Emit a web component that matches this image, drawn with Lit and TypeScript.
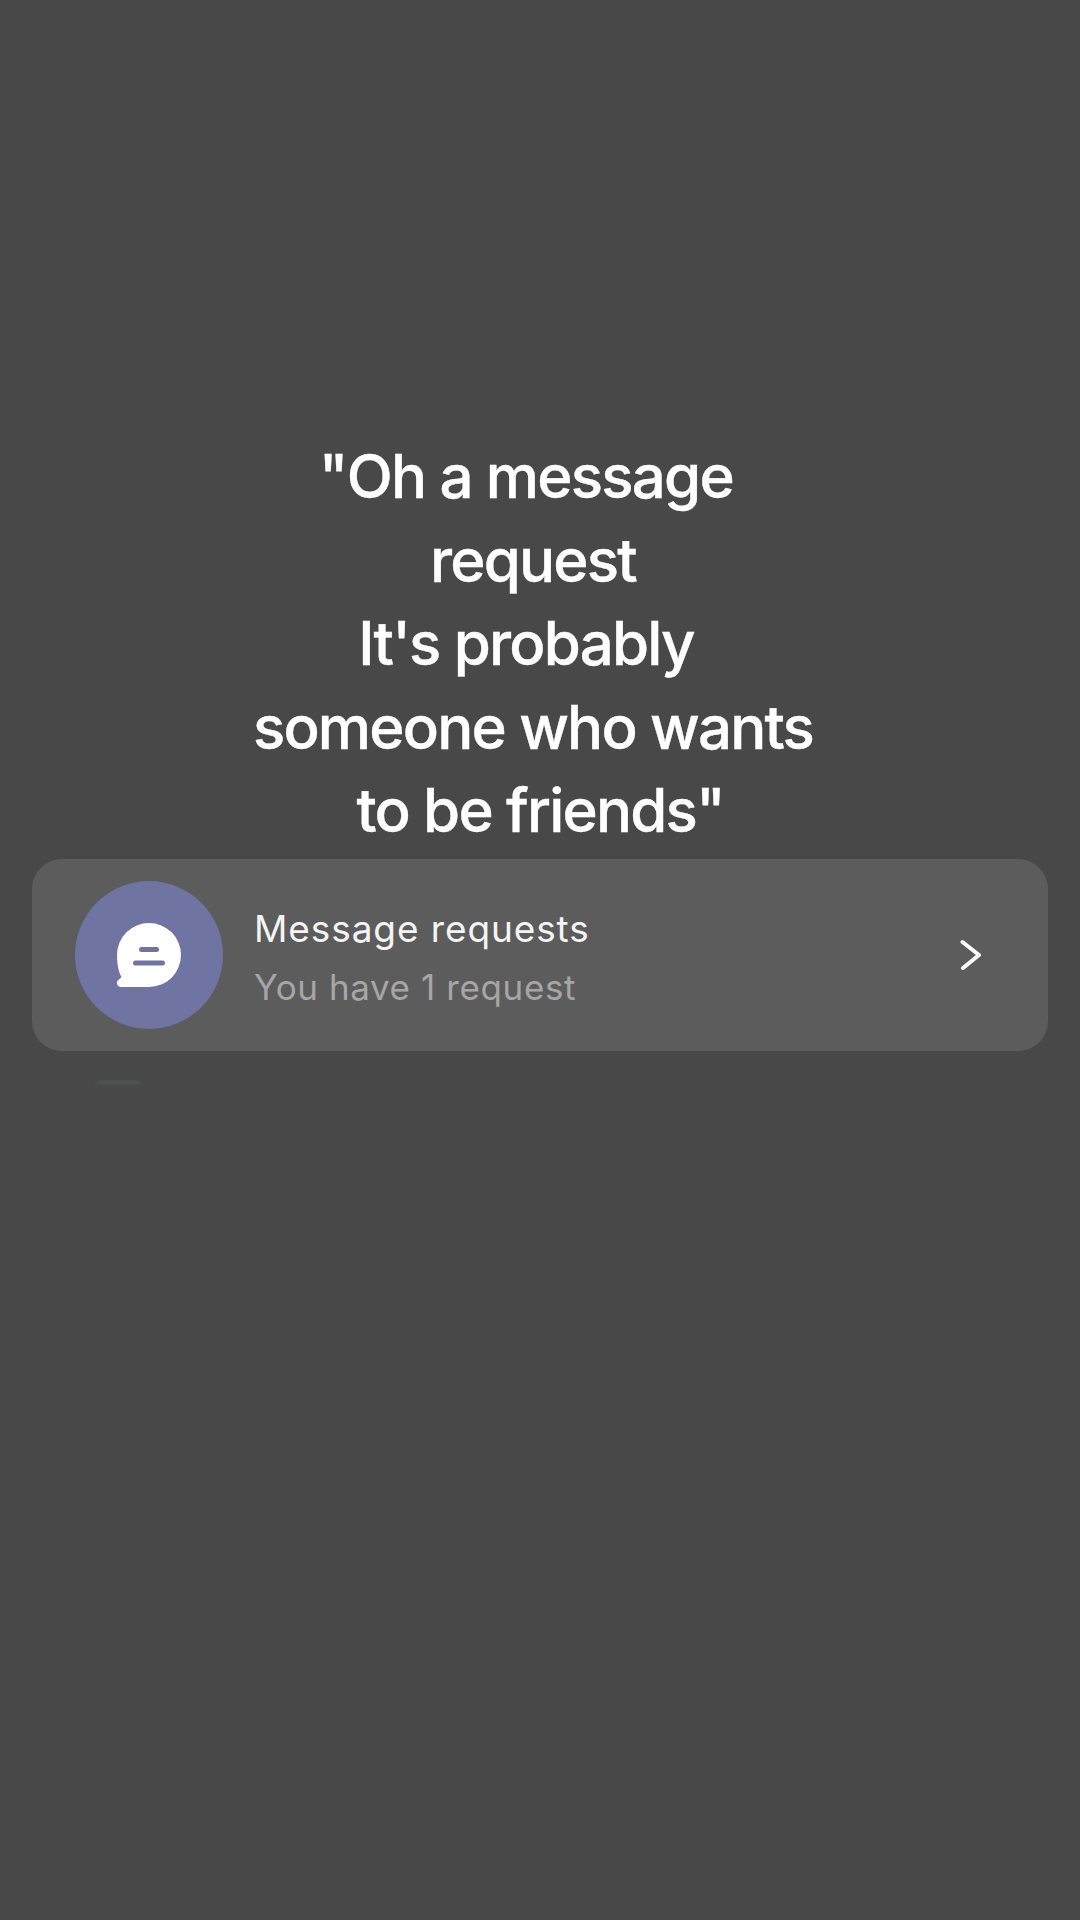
import { LitElement, html, css } from "lit";
import { customElement } from "lit/decorators.js";

@customElement("app-root")
export class AppRoot extends LitElement {
  static styles = css`
    :host {
      display: block;
      width: 1080px;
      height: 1920px;
      background: #484848;
      overflow: hidden;
      font-family: Inter, "Liberation Sans", sans-serif;
    }
    .page {
      display: flex;
      flex-direction: column;
      align-items: center;
      padding-top: 435px;
    }
    .quote {
      box-sizing: border-box;
      width: 1080px;
      height: 420px;
      padding-right: 14px;
      text-align: center;
      color: #fff;
      font-size: 60px;
      font-weight: 500;
      line-height: 83.5px;
      letter-spacing: -1.8px;
      -webkit-text-stroke: 0.4px #fff;
    }
    .quote div {
      white-space: pre;
    }
    .card {
      box-sizing: border-box;
      width: 1016px;
      height: 192px;
      margin-top: 4px;
      border-radius: 30px;
      background: #5c5c5c;
      display: flex;
      align-items: center;
      padding: 0 66px 0 43px;
    }
    .avatar {
      width: 148px;
      height: 148px;
      border-radius: 50%;
      background: #6f74a3;
      display: flex;
      align-items: center;
      justify-content: center;
      flex: none;
    }
    .text {
      flex: 1;
      margin-left: 31px;
      padding-top: 5px;
      display: flex;
      flex-direction: column;
      gap: 18px;
    }
    .title {
      font-size: 37px;
      line-height: 41px;
      letter-spacing: 0.9px;
      color: #f4f4f4;
    }
    .sub {
      font-size: 35px;
      line-height: 41px;
      letter-spacing: 0.6px;
      color: #a6a6a6;
    }
    .rule {
      width: 44px;
      height: 3px;
      margin: 30px 0 0 -844px;
      border-radius: 2px;
      background: #4d5a56;
      filter: blur(1.5px);
    }
    svg {
      display: block;
    }
  `;

  render() {
    return html`
      <div class="page">
        <div class="quote">
          <div>"Oh a message </div>
          <div>request</div>
          <div>It's probably </div>
          <div>someone who wants</div>
          <div> to be friends"</div>
        </div>
        <div class="card">
          <div class="avatar">
            <svg width="72" height="72" viewBox="0 0 72 72">
              <path
                fill="#fff"
                d="M36 4a32 32 0 0 1 0 64H8a4 4 0 0 1-2-7.500L8.500 58C5.500 53 4 45 4 36A32 32 0 0 1 36 4Z"
              />
              <rect x="26" y="28" width="20" height="5" rx="2.500" fill="#6f74a3" />
              <rect x="20" y="41.500" width="32" height="5" rx="2.500" fill="#6f74a3" />
            </svg>
          </div>
          <div class="text">
            <div class="title">Message requests</div>
            <div class="sub">You have 1 request</div>
          </div>
          <svg width="22" height="32" viewBox="0 0 22 32">
            <path
              d="M2.500 3 L19 16 L3 29"
              fill="none"
              stroke="#fff"
              stroke-width="4"
              stroke-linecap="round"
              stroke-linejoin="round"
            />
          </svg>
        </div>
        <div class="rule"></div>
      </div>
    `;
  }
}
